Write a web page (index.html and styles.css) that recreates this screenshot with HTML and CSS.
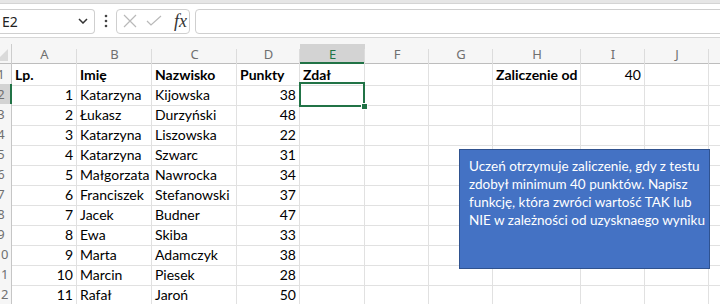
FILE: index.html
```html
<!DOCTYPE html>
<html lang="pl">
<head>
    <meta charset="UTF-8">
    <title>Zaliczenie</title>
    <link rel="stylesheet" href="styles.css">
</head>
<body>
    <div class="top-strip"></div>

    <div class="formula-bar">
        <div class="name-box">
            <span>E2</span>
            <svg width="10" height="6" viewBox="0 0 10 6"><polyline points="1,1 5,5 9,1" fill="none" stroke="#333" stroke-width="1.5"/></svg>
        </div>
        <div class="dots">
            <svg width="4" height="14" viewBox="0 0 4 14"><circle cx="2" cy="2" r="1.3" fill="#444"/><circle cx="2" cy="7" r="1.3" fill="#444"/><circle cx="2" cy="12" r="1.3" fill="#444"/></svg>
        </div>
        <div class="fx-box">
            <svg width="14" height="14" viewBox="0 0 14 14"><path d="M1 1 L13 13 M13 1 L1 13" stroke="#b9b9b9" stroke-width="1.2"/></svg>
            <svg width="16" height="12" viewBox="0 0 16 12"><polyline points="1,6 5,10 15,1" fill="none" stroke="#b9b9b9" stroke-width="1.2"/></svg>
            <span class="fx">fx</span>
        </div>
        <div class="formula-input"></div>
    </div>

    <div class="sheet">
        <div class="row head">
            <div class="corner"></div>
            <div class="ch">A</div>
            <div class="ch">B</div>
            <div class="ch">C</div>
            <div class="ch">D</div>
            <div class="ch active">E</div>
            <div class="ch">F</div>
            <div class="ch">G</div>
            <div class="ch">H</div>
            <div class="ch">I</div>
            <div class="ch">J</div>
            <div class="ch"></div>
        </div>

        <div class="row">
            <div class="rh"><span>1</span></div>
            <div class="c b">Lp.</div>
            <div class="c b">Imię</div>
            <div class="c b">Nazwisko</div>
            <div class="c b">Punkty</div>
            <div class="c b">Zdał</div>
            <div class="c"></div>
            <div class="c"></div>
            <div class="c b">Zaliczenie od</div>
            <div class="c n">40</div>
            <div class="c"></div>
            <div class="c"></div>
        </div>

        <div class="row">
            <div class="rh sel"><span>2</span></div>
            <div class="c n">1</div>
            <div class="c">Katarzyna</div>
            <div class="c">Kijowska</div>
            <div class="c n">38</div>
            <div class="c cur"></div>
            <div class="c"></div><div class="c"></div><div class="c"></div><div class="c"></div><div class="c"></div><div class="c"></div>
        </div>

        <div class="row">
            <div class="rh"><span>3</span></div>
            <div class="c n">2</div>
            <div class="c">Łukasz</div>
            <div class="c">Durzyński</div>
            <div class="c n">48</div>
            <div class="c"></div><div class="c"></div><div class="c"></div><div class="c"></div><div class="c"></div><div class="c"></div><div class="c"></div>
        </div>

        <div class="row">
            <div class="rh"><span>4</span></div>
            <div class="c n">3</div>
            <div class="c">Katarzyna</div>
            <div class="c">Liszowska</div>
            <div class="c n">22</div>
            <div class="c"></div><div class="c"></div><div class="c"></div><div class="c"></div><div class="c"></div><div class="c"></div><div class="c"></div>
        </div>

        <div class="row">
            <div class="rh"><span>5</span></div>
            <div class="c n">4</div>
            <div class="c">Katarzyna</div>
            <div class="c">Szwarc</div>
            <div class="c n">31</div>
            <div class="c"></div><div class="c"></div><div class="c"></div><div class="c"></div><div class="c"></div><div class="c"></div><div class="c"></div>
        </div>

        <div class="row">
            <div class="rh"><span>6</span></div>
            <div class="c n">5</div>
            <div class="c">Małgorzata</div>
            <div class="c">Nawrocka</div>
            <div class="c n">34</div>
            <div class="c"></div><div class="c"></div><div class="c"></div><div class="c"></div><div class="c"></div><div class="c"></div><div class="c"></div>
        </div>

        <div class="row">
            <div class="rh"><span>7</span></div>
            <div class="c n">6</div>
            <div class="c">Franciszek</div>
            <div class="c">Stefanowski</div>
            <div class="c n">37</div>
            <div class="c"></div><div class="c"></div><div class="c"></div><div class="c"></div><div class="c"></div><div class="c"></div><div class="c"></div>
        </div>

        <div class="row">
            <div class="rh"><span>8</span></div>
            <div class="c n">7</div>
            <div class="c">Jacek</div>
            <div class="c">Budner</div>
            <div class="c n">47</div>
            <div class="c"></div><div class="c"></div><div class="c"></div><div class="c"></div><div class="c"></div><div class="c"></div><div class="c"></div>
        </div>

        <div class="row">
            <div class="rh"><span>9</span></div>
            <div class="c n">8</div>
            <div class="c">Ewa</div>
            <div class="c">Skiba</div>
            <div class="c n">33</div>
            <div class="c"></div><div class="c"></div><div class="c"></div><div class="c"></div><div class="c"></div><div class="c"></div><div class="c"></div>
        </div>

        <div class="row">
            <div class="rh"><span>10</span></div>
            <div class="c n">9</div>
            <div class="c">Marta</div>
            <div class="c">Adamczyk</div>
            <div class="c n">38</div>
            <div class="c"></div><div class="c"></div><div class="c"></div><div class="c"></div><div class="c"></div><div class="c"></div><div class="c"></div>
        </div>

        <div class="row">
            <div class="rh"><span>11</span></div>
            <div class="c n">10</div>
            <div class="c">Marcin</div>
            <div class="c">Piesek</div>
            <div class="c n">28</div>
            <div class="c"></div><div class="c"></div><div class="c"></div><div class="c"></div><div class="c"></div><div class="c"></div><div class="c"></div>
        </div>

        <div class="row">
            <div class="rh"><span>12</span></div>
            <div class="c n">11</div>
            <div class="c">Rafał</div>
            <div class="c">Jaroń</div>
            <div class="c n">50</div>
            <div class="c"></div><div class="c"></div><div class="c"></div><div class="c"></div><div class="c"></div><div class="c"></div><div class="c"></div>
        </div>

        <div class="note">
            Uczeń otrzymuje zaliczenie, gdy z testu<br>
            zdobył minimum 40 punktów. Napisz<br>
            funkcję, która zwróci wartość TAK lub<br>
            NIE w zależności od uzysknaego wyniku
        </div>
    </div>
</body>
</html>
```

FILE: styles.css
```css
html, body {
    margin: 0;
}

body {
    width: 720px;
    height: 304px;
    overflow: hidden;
    background: #fff;
    font-family: Lato, 'Liberation Sans', sans-serif;
    color: #000;
}

.top-strip {
    height: 3px;
    background: #e6e6e6;
    border-bottom: 1px solid #d4d4d4;
}

/* formula bar */
.formula-bar {
    display: flex;
    align-items: center;
    height: 32px;
    padding-top: 1px;
    border-bottom: 1px solid #d6d6d6;
    font-family: 'Noto Sans', sans-serif;
}

.name-box, .fx-box, .formula-input {
    box-sizing: border-box;
    height: 25px;
    border: 1px solid #cfcfcf;
    border-radius: 4px;
    background: #fff;
}

.name-box {
    width: 96px;
    margin-left: -1px;
    display: flex;
    align-items: center;
    justify-content: space-between;
    padding: 0 6px 0 3px;
    border-left: none;
    border-top-left-radius: 0;
    border-bottom-left-radius: 0;
    font-size: 14px;
    color: #222;
}

.dots {
    width: 21px;
    display: flex;
    justify-content: center;
}

.fx-box {
    width: 74px;
    display: flex;
    align-items: center;
    gap: 9px;
    padding-left: 6px;
}

.fx {
    font-family: 'Liberation Serif', serif;
    font-style: italic;
    font-size: 18px;
    color: #333;
    margin-left: 3px;
}

.formula-input {
    flex-grow: 1;
    margin-left: 5px;
    margin-right: -6px;
}

/* sheet */
.sheet {
    position: relative;
    background: #f6f6f6;
    padding-top: 6px;
}

.row {
    display: grid;
    grid-template-columns: 12px 65px 75px 85px 63px 65px 64px 64px 88px 64px 64px 20px;
    height: 20px;
    background: #fff;
    font-size: 14px;
}

.row.head {
    height: 19px;
    background: #f6f6f6;
    border-bottom: 1px solid #bdbdbd;
}

.corner {
    position: relative;
    border-right: 1px solid #cdcdcd;
    overflow: hidden;
}

.corner::after {
    content: '';
    position: absolute;
    right: 3px;
    bottom: 3px;
    border-left: 12px solid transparent;
    border-bottom: 12px solid #dadada;
}

.ch {
    position: relative;
    text-align: center;
    font-family: 'Noto Sans', sans-serif;
    font-size: 13px;
    line-height: 20px;
    color: #707070;
}

.ch::after {
    content: '';
    position: absolute;
    right: 0;
    top: 5px;
    bottom: 0;
    border-right: 1px solid #dcdcdc;
}

.ch.active {
    background: #d3d3d3;
    color: #217346;
    box-shadow: inset 0 -2px 0 #217346;
}

.rh {
    overflow: hidden;
    background: #f6f6f6;
    border-right: 1px solid #c6c6c6;
    border-bottom: 1px solid #dcdcdc;
    font-family: 'Noto Sans', sans-serif;
    font-size: 13px;
    line-height: 20px;
    color: #707070;
}

.rh span {
    display: block;
    width: 28px;
    margin-left: -13px;
    text-align: center;
}

.rh.sel {
    background: #d3d3d3;
    border-right: 2px solid #217346;
}

.c {
    box-sizing: border-box;
    border-right: 1px solid #e1e1e1;
    border-bottom: 1px solid #e1e1e1;
    padding: 0 3px;
    line-height: 21px;
    white-space: nowrap;
    overflow: visible;
}

.c.b {
    font-weight: bold;
}

.c.n {
    text-align: right;
}

.c.cur {
    position: relative;
}

.c.cur::before {
    content: '';
    position: absolute;
    left: -1px;
    top: -2px;
    right: -1px;
    bottom: -2px;
    border: 2px solid #217346;
}

.c.cur::after {
    content: '';
    position: absolute;
    right: -4px;
    bottom: -5px;
    width: 5px;
    height: 5px;
    background: #217346;
    border: 1px solid #fff;
}

.note {
    position: absolute;
    left: 459px;
    top: 111px;
    width: 251px;
    height: 120px;
    box-sizing: border-box;
    padding: 7px 9px;
    background: #4472c4;
    border: 1px solid #2f528f;
    color: #fff;
    font-size: 13.5px;
    line-height: 18px;
    white-space: nowrap;
}
```
